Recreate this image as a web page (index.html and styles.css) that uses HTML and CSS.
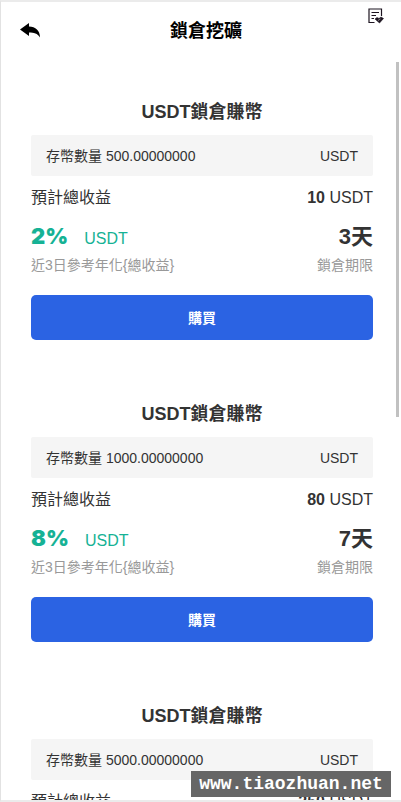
FILE: index.html
```html
<!DOCTYPE html>
<html lang="zh-Hant">
<head>
<meta charset="utf-8">
<meta name="viewport" content="width=device-width, initial-scale=1">
<title>鎖倉挖礦</title>
<link rel="stylesheet" href="styles.css">
</head>
<body>
<div class="app">
  <header class="topbar">
    <button class="icon-button back" type="button" aria-label="返回">
      <svg width="22" height="18" viewBox="0 0 22 18" aria-hidden="true"><path d="M1 7.500 L10 1 V4.600 C16.500 4.800 21 8.500 21 15.500 C18.500 11.500 15 10.600 10 10.600 V14 Z"/></svg>
    </button>
    <h1 class="page-title">鎖倉挖礦</h1>
    <button class="icon-button orders" type="button" aria-label="訂單">
      <svg width="16" height="16" viewBox="0 0 16 16" fill="none" stroke="#1d1420" stroke-width="1.200" aria-hidden="true"><path d="M13.500 8 V1 H1 V14.500 H6.500"/><path d="M3.500 4.500 H11 M3.500 7.500 H8 M3.500 10.500 H6"/><path d="M7 11 L9 9.500 L11 10.500 L13 9 L15.500 10.500 L11.500 15 Z" fill="#1d1420" stroke-width="0.600"/><path d="M10 12.500 L12.500 11" stroke="#aaa" stroke-width="0.800"/></svg>
    </button>
  </header>
  <main class="plans">
    <section class="plan">
      <h2 class="plan-title">USDT鎖倉賺幣</h2>
      <div class="deposit"><span>存幣數量 500.00000000</span><span>USDT</span></div>
      <div class="row earnings"><span>預計總收益</span><span><b>10</b> USDT</span></div>
      <div class="row rates"><span class="rate"><b class="percent">2%</b>USDT</span><b class="term">3天</b></div>
      <div class="row notes"><span>近3日參考年化{總收益}</span><span>鎖倉期限</span></div>
      <button class="buy" type="button">購買</button>
    </section>
    <section class="plan">
      <h2 class="plan-title">USDT鎖倉賺幣</h2>
      <div class="deposit"><span>存幣數量 1000.00000000</span><span>USDT</span></div>
      <div class="row earnings"><span>預計總收益</span><span><b>80</b> USDT</span></div>
      <div class="row rates"><span class="rate"><b class="percent">8%</b>USDT</span><b class="term">7天</b></div>
      <div class="row notes"><span>近3日參考年化{總收益}</span><span>鎖倉期限</span></div>
      <button class="buy" type="button">購買</button>
    </section>
    <section class="plan">
      <h2 class="plan-title">USDT鎖倉賺幣</h2>
      <div class="deposit"><span>存幣數量 5000.00000000</span><span>USDT</span></div>
      <div class="row earnings"><span>預計總收益</span><span><b>250</b> USDT</span></div>
    </section>
  </main>
  <div class="scroll-thumb" aria-hidden="true"></div>
  <div class="site-mark">www.tiaozhuan.net</div>
</div>
</body>
</html>
```
FILE: styles.css
```css
* {
  box-sizing: border-box;
}

body {
  margin: 0;
  background: #fff;
  color: #333;
  font-family: "Liberation Sans", "Noto Sans CJK TC", sans-serif;
  font-size: 16px;
}

.app {
  position: relative;
  display: flex;
  flex-direction: column;
  height: 100vh;
  border: 1px solid #e2e2e2;
  border-width: 2px 0 2px 1px;
  border-top-color: #ebebeb;
  border-bottom-color: #ebebeb;
  overflow: hidden;
}

.topbar {
  display: grid;
  grid-template-columns: 1fr auto 1fr;
  align-items: center;
  flex: none;
  height: 58px;
  padding-left: 10px;
}

.icon-button {
  display: flex;
  padding: 0;
  border: 0;
  background: none;
  cursor: pointer;
}

.back {
  justify-self: start;
  margin-left: 8px;
}

.orders {
  align-self: start;
  justify-self: end;
  margin-right: 17px;
  padding-top: 6px;
}

.page-title {
  margin: 0;
  color: #000;
  font-size: 18px;
  line-height: 24px;
}

.plans {
  flex: 1;
  min-height: 0;
  padding-right: 28px;
  padding-left: 30px;
  overflow-y: auto;
  scrollbar-width: none;
}

.plan {
  padding: 40px 0 22px;
}

.plan-title {
  margin: 0 0 11px;
  font-size: 18px;
  line-height: 24px;
  text-align: center;
}

.deposit {
  display: flex;
  align-items: center;
  justify-content: space-between;
  height: 41px;
  padding: 0 15px;
  border-radius: 2px;
  background: #f5f5f5;
  font-size: 14px;
  line-height: 20px;
}

.row {
  display: flex;
  align-items: center;
  justify-content: space-between;
}

.earnings {
  height: 43px;
  line-height: 24px;
}

.rates {
  height: 36px;
  line-height: 36px;
}

.rate {
  display: flex;
  align-items: baseline;
  gap: 16px;
  color: #16b295;
}

.percent {
  font-family: Inter, "Liberation Sans", sans-serif;
  font-size: 22px;
  font-weight: 900;
}

.term {
  font-size: 22px;
}

.notes {
  height: 20px;
  color: #999;
  font-size: 14px;
  line-height: 20px;
}

.buy {
  display: block;
  width: 100%;
  height: 45px;
  margin-top: 20px;
  padding: 0;
  border: 0;
  border-radius: 5px;
  background: #2b63e3;
  color: #fff;
  font: bold 14px/20px "Liberation Sans", "Noto Sans CJK TC", sans-serif;
  cursor: pointer;
}

.scroll-thumb {
  position: absolute;
  top: 60px;
  right: 2px;
  width: 3px;
  height: 355px;
  background: #c1c1c1;
}

.site-mark {
  position: absolute;
  right: 10px;
  bottom: 3px;
  width: 200px;
  background: #666;
  color: #fff;
  font: bold 18px/26px "Liberation Mono", monospace;
  text-align: center;
}
```
